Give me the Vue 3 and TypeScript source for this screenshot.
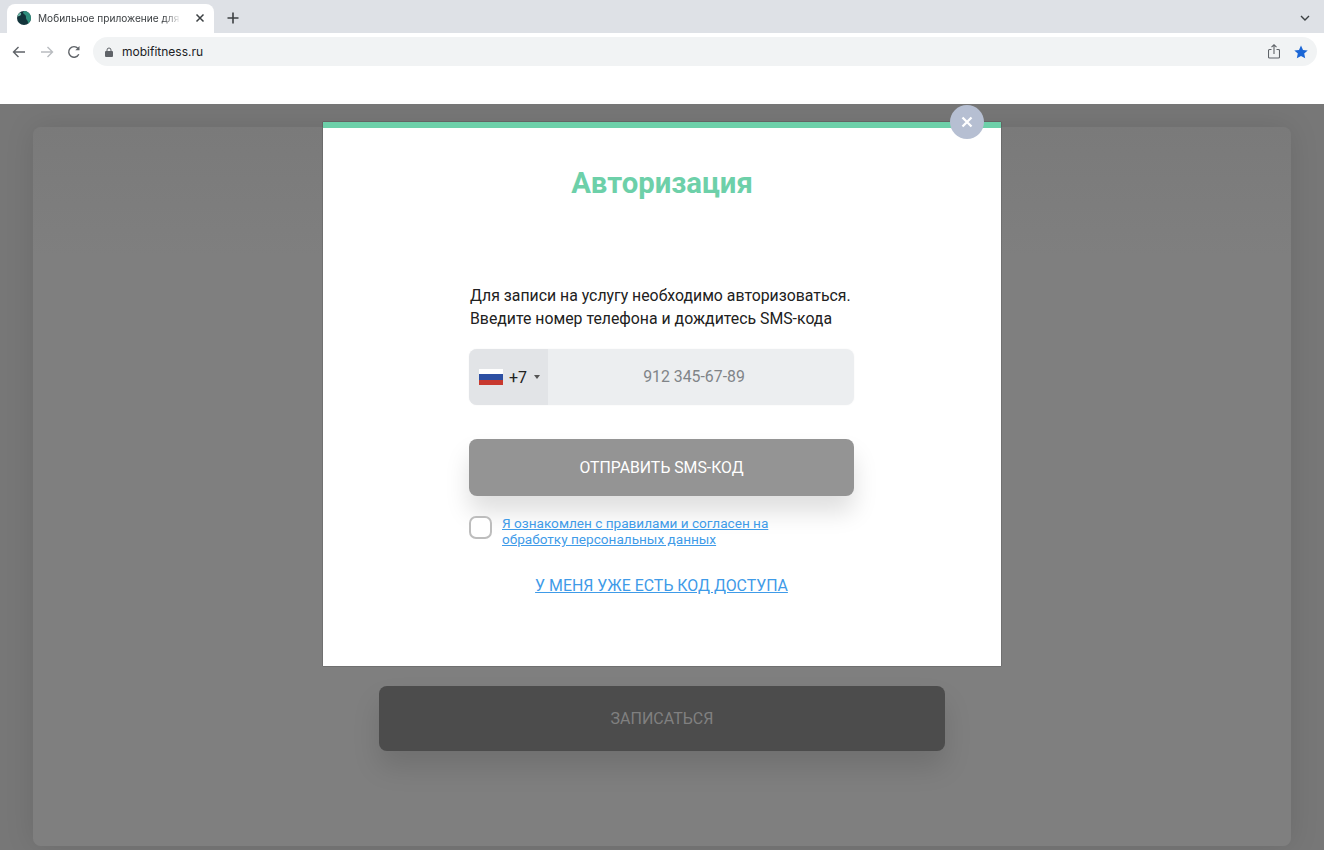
<script setup lang="ts">
const title: string = 'Авторизация'
</script>

<template>
  <div class="root">
    <header class="browser">
      <div class="tabbar">
        <div class="tab">
          <svg class="favicon" width="14" height="14" viewBox="0 0 14 14">
            <circle cx="7" cy="7" r="7" fill="#12343b" />
            <path d="M7 0a7 7 0 0 1 7 7 7 7 0 0 1-3 5.700C11.500 9 8.500 9 9 6 9.300 4 7 3.500 6 2 6 1.200 6.400.5 7 0Z" fill="#2f8f7d" />
            <path d="M2 2.500C3.500 1 4.500 2 4 3.500 3.400 5 1.500 5.500.5 5 .7 4 1.200 3.200 2 2.500Z" fill="#6fb8a8" />
          </svg>
          <span class="tab-title">Мобильное приложение для</span>
          <svg class="tab-close" width="10" height="10" viewBox="0 0 10 10">
            <path d="M1.500 1.500l7 7M8.500 1.500l-7 7" stroke="#3c4043" stroke-width="1.500" fill="none" />
          </svg>
        </div>
        <svg class="new-tab" width="12" height="12" viewBox="0 0 12 12">
          <path d="M6 .5v11M.5 6h11" stroke="#3c4043" stroke-width="1.600" fill="none" />
        </svg>
        <svg class="tab-menu" width="10" height="6" viewBox="0 0 10 6">
          <path d="M1 1l4 4 4-4" stroke="#3c4043" stroke-width="1.400" fill="none" />
        </svg>
      </div>
      <div class="toolbar">
        <svg class="nav" width="14" height="14" viewBox="0 0 14 14">
          <path d="M13 7H1.500M6.500 2l-5 5 5 5" stroke="#5f6368" stroke-width="1.400" fill="none" />
        </svg>
        <svg class="nav" width="14" height="14" viewBox="0 0 14 14">
          <path d="M1 7h11.500M7.500 2l5 5-5 5" stroke="#b9bcc0" stroke-width="1.400" fill="none" />
        </svg>
        <svg class="nav" width="14" height="14" viewBox="0 0 14 14">
          <path d="M11.800 9.200A5.300 5.300 0 1 1 11 3.400" stroke="#5f6368" stroke-width="1.400" fill="none" />
          <path d="M12.500 1v4.200H8.300z" fill="#5f6368" />
        </svg>
        <div class="omnibox">
          <svg width="8" height="10" viewBox="0 0 8 10">
            <rect x="0" y="4" width="8" height="6" rx="1" fill="#5f6368" />
            <path d="M2 4.500V3a2 2 0 0 1 4 0v1.500" stroke="#5f6368" stroke-width="1" fill="none" />
          </svg>
          <span class="url">mobifitness.ru</span>
          <svg class="share" width="12" height="15" viewBox="0 0 12 15">
            <path d="M3.500 5.500H1.500a1 1 0 0 0-1 1v6.500a1 1 0 0 0 1 1h9a1 1 0 0 0 1-1V6.500a1 1 0 0 0-1-1H8.500M6 10V1M3.500 3.200L6 .8l2.500 2.400" stroke="#5f6368" stroke-width="1.100" fill="none" />
          </svg>
          <svg class="star" width="14" height="14" viewBox="0 0 14 14">
            <path d="M7 .5l2 4.400 4.700.5-3.500 3.200 1 4.700L7 10.900l-4.200 2.400 1-4.700L.3 5.400 5 4.900z" fill="#1a66d6" />
          </svg>
        </div>
      </div>
      <div class="bookmarks"></div>
    </header>

    <main class="page">
      <section class="card">
        <button class="signup" type="button">ЗАПИСАТЬСЯ</button>
      </section>

      <div class="modal">
        <button class="close" type="button" aria-label="Закрыть">
          <svg width="12" height="12" viewBox="0 0 12 12">
            <path d="M1.500 1.500l9 9M10.500 1.500l-9 9" stroke="#fff" stroke-width="2.300" fill="none" />
          </svg>
        </button>
        <h1 class="title">{{ title }}</h1>
        <div class="form">
          <p class="lead">Для записи на услугу необходимо авторизоваться.<br />Введите номер телефона и дождитесь SMS-кода</p>
          <div class="phone">
            <div class="country">
              <span class="flag"><i class="white"></i><i class="blue"></i><i class="red"></i></span>
              <span class="code">+7</span>
              <span class="caret"></span>
            </div>
            <div class="placeholder">912 345-67-89</div>
          </div>
          <button class="send" type="button">ОТПРАВИТЬ SMS-КОД</button>
          <div class="agree">
            <span class="checkbox"></span>
            <a class="agree-link">Я ознакомлен с правилами и согласен на<br />обработку персональных данных</a>
          </div>
          <a class="have-code">У МЕНЯ УЖЕ ЕСТЬ КОД ДОСТУПА</a>
        </div>
      </div>
    </main>
  </div>
</template>

<style>
html, body { margin: 0; padding: 0; background: #fff; overflow: hidden; }
</style>

<style scoped>
.root {
  width: 1324px;
  height: 850px;
  display: flex;
  flex-direction: column;
  overflow: hidden;
  font-family: Roboto, "Liberation Sans", sans-serif;
}
.browser { flex: none; height: 104px; background: #fff; display: flex; flex-direction: column; }
.tabbar {
  height: 33px;
  background: #dee1e6;
  display: flex;
  align-items: flex-end;
  padding-left: 7px;
  box-sizing: border-box;
}
.tab {
  width: 207px;
  height: 29px;
  background: #fff;
  border-radius: 8px 8px 0 0;
  display: flex;
  align-items: center;
  padding: 0 9px 1px 10px;
  box-sizing: border-box;
}
.favicon { flex: none; }
.tab-title {
  margin-left: 7px;
  width: 144px;
  font-family: Inter, "Noto Sans", sans-serif;
  font-size: 10.100px;
  color: #3c4043;
  white-space: nowrap;
  -webkit-mask-image: linear-gradient(90deg, #000 88%, transparent 100%);
  mask-image: linear-gradient(90deg, #000 88%, transparent 100%);
}
.tab-close { margin-left: 14px; flex: none; }
.new-tab { margin: 0 0 9px 13px; flex: none; }
.tab-menu { margin: 0 14px 12px auto; flex: none; }
.toolbar {
  height: 34px;
  display: flex;
  align-items: center;
  padding: 3px 7px 0 12px;
  gap: 13.500px;
  box-sizing: border-box;
}
.nav { flex: none; }
.omnibox {
  flex: 1;
  height: 29px;
  margin-left: -1.500px;
  background: #f1f3f4;
  border-radius: 15px;
  display: flex;
  align-items: center;
  padding: 0 9px 0 12px;
  box-sizing: border-box;
}
.url {
  margin-left: 9px;
  font-family: Inter, "Noto Sans", sans-serif;
  font-size: 12px;
  color: #202124;
}
.share { margin-left: auto; }
.star { margin-left: 14px; }
.bookmarks { flex: 1; background: #fff; }

.page {
  flex: 1;
  position: relative;
  background: #777;
  padding: 23px 33px 4px;
  box-sizing: border-box;
  display: flex;
}
.card {
  flex: 1;
  background: linear-gradient(#7a7a7a, #7f7f7f 18%);
  border-radius: 8px;
  box-shadow: 0 0 30px rgba(0, 0, 0, 0.1);
  display: flex;
  justify-content: center;
  align-items: flex-start;
  padding-top: 559px;
  box-sizing: border-box;
}
.signup {
  width: 566px;
  height: 65px;
  border: 0;
  border-radius: 8px;
  background: #4c4c4c;
  color: #808080;
  font-family: Roboto, sans-serif;
  font-size: 16px;
  box-shadow: 0 16px 28px rgba(0, 0, 0, 0.12);
}
.modal {
  position: absolute;
  left: 323px;
  top: 18px;
  width: 678px;
  height: 544px;
  background: #fff;
  border-top: 6px solid #6dd0a9;
  box-sizing: border-box;
  box-shadow: 0 0 1px rgba(0, 0, 0, 0.7);
  display: flex;
  flex-direction: column;
  align-items: center;
}
.close {
  position: absolute;
  right: 17px;
  top: -23px;
  width: 34px;
  height: 34px;
  padding: 0;
  border: 0;
  border-radius: 50%;
  background: #b6bfd2;
  display: flex;
  align-items: center;
  justify-content: center;
}
.title {
  margin: 39px 0 0;
  font-size: 29.300px;
  line-height: 33px;
  font-weight: 700;
  color: #6dd0a9;
}
.form {
  width: 385px;
  margin-top: 84px;
  margin-left: -1px;
  display: flex;
  flex-direction: column;
}
.lead {
  margin: 0;
  padding-left: 1px;
  font-size: 15.840px;
  line-height: 23px;
  color: #212121;
}
.phone {
  margin-top: 19px;
  height: 56px;
  background: #eceef0;
  border-radius: 8px;
  display: flex;
  overflow: hidden;
  box-shadow: 0 0 2px rgba(0, 0, 0, 0.05);
}
.country {
  width: 79px;
  background: #e2e4e7;
  display: flex;
  align-items: center;
  padding-left: 10px;
  box-sizing: border-box;
}
.flag {
  width: 24px;
  height: 16px;
  display: flex;
  flex-direction: column;
  flex: none;
}
.flag i { flex: 1; display: block; }
.flag .white { background: #fff; }
.flag .blue { background: #2c4fa3; }
.flag .red { background: #c8392f; }
.code { margin-left: 6px; font-size: 16px; color: #212121; }
.caret {
  margin-left: 7px;
  width: 0;
  height: 0;
  border-left: 3.500px solid transparent;
  border-right: 3.500px solid transparent;
  border-top: 4px solid #555;
}
.placeholder {
  flex: 1;
  text-align: center;
  line-height: 56px;
  font-size: 15.850px;
  color: #808488;
  padding-right: 14px;
  box-sizing: border-box;
}
.send {
  margin-top: 34px;
  height: 57px;
  border: 0;
  border-radius: 8px;
  background: #949494;
  color: #fff;
  font-family: Roboto, sans-serif;
  font-size: 15.800px;
  box-shadow: 0 16px 24px rgba(0, 0, 0, 0.13);
}
.agree {
  margin-top: 19px;
  display: flex;
  align-items: flex-start;
  gap: 10px;
}
.checkbox {
  width: 23px;
  height: 23px;
  margin-top: 1px;
  flex: none;
  box-sizing: border-box;
  border: 2px solid #bdbdbd;
  border-radius: 7px;
  background: #fff;
}
.agree-link {
  font-size: 13.600px;
  line-height: 16px;
  color: #3f9be8;
  text-decoration: underline;
}
.have-code {
  margin-top: 29px;
  text-align: center;
  font-size: 15.900px;
  line-height: 19px;
  color: #3f9be8;
  text-decoration: underline;
}
</style>
